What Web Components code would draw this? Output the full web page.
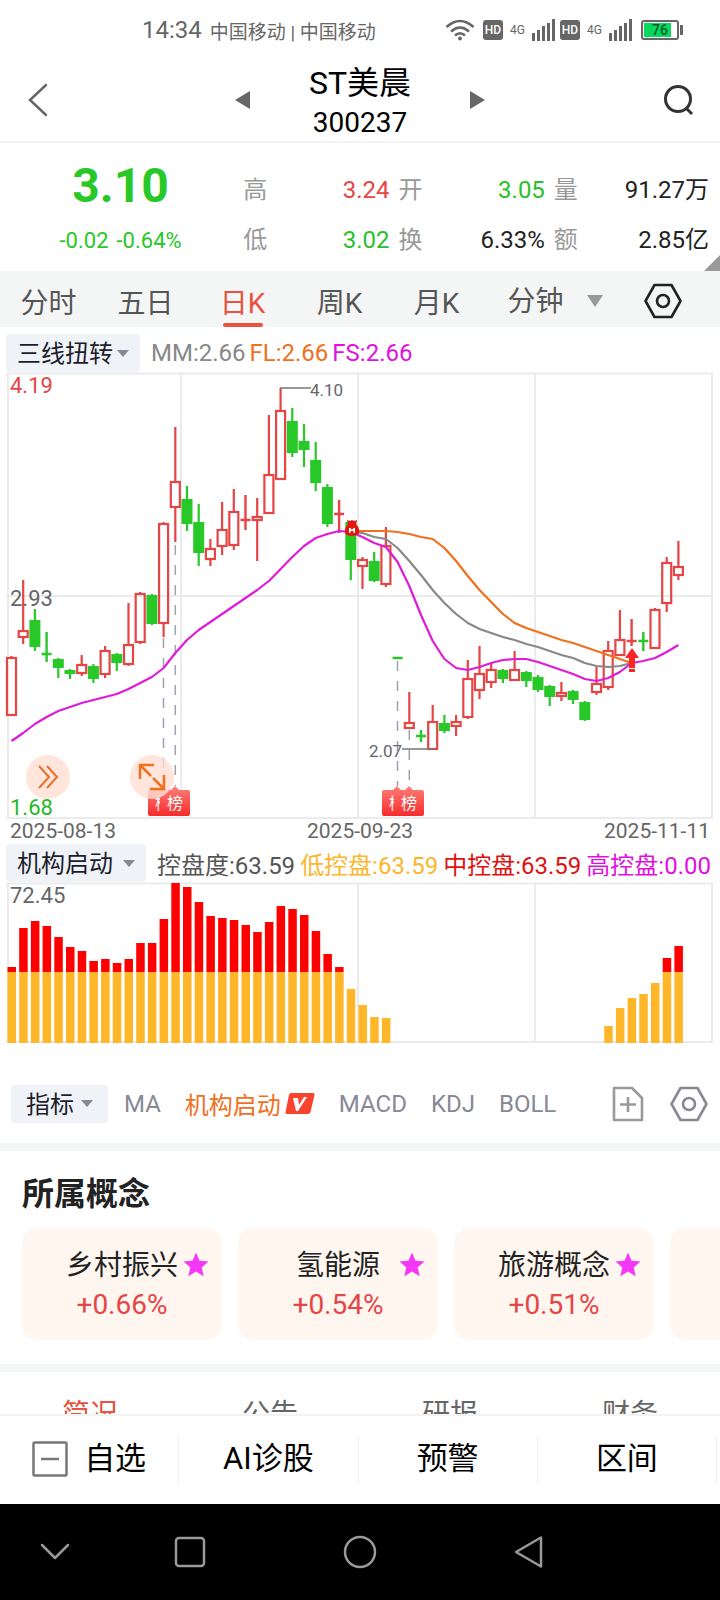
<!DOCTYPE html>
<html lang="zh-CN">
<head>
<meta charset="utf-8">
<meta name="viewport" content="width=device-width, initial-scale=1">
<title>ST美晨 300237</title>
<style>
    body {
        margin: 0;
        font-family: Roboto, 'Noto Sans CJK SC', sans-serif;
        background: #fff;
        color: #222;
    }
</style>
</head>
<body>
<stock-app></stock-app>

<script>
const base = /*html*/ `
    <style>
        * { box-sizing: border-box; }
        :host { display: block; }
        svg { display: block; flex: none; }
        button, select {
            font: inherit;
            color: inherit;
            background: none;
            border: 0;
            padding: 0;
            margin: 0;
            appearance: none;
            cursor: pointer;
        }
    </style>
`

class BaseElement extends HTMLElement {
    constructor() {
        super()
        this.shadow = this.attachShadow({ mode: 'open' })
        this.shadow.innerHTML = base + this.render()
    }
}

/**
 * Candles: high, body top, body bottom, low, direction (1 up, 0 down)
 */
const candles = [
    [284, 285, 343, 344, 1], [208, 258, 265, 272, 1], [237, 248, 275, 279, 0], [260, 282, 284, 290, 0],
    [286, 287, 296, 306, 0], [297, 298, 302, 307, 0], [283, 292, 301, 304, 1], [292, 294, 307, 311, 0],
    [274, 278, 302, 306, 1], [281, 282, 291, 299, 0], [231, 272, 292, 294, 1], [220, 221, 270, 272, 1],
    [222, 223, 252, 253, 0], [150, 151, 251, 265, 1], [55, 109, 135, 170, 1], [114, 127, 152, 159, 0],
    [132, 150, 181, 194, 0], [167, 176, 187, 194, 1], [130, 157, 174, 183, 1], [117, 139, 173, 178, 1],
    [123, 148, 150, 158, 1], [126, 144, 148, 189, 1], [43, 102, 141, 141, 1], [16, 38, 107, 107, 1],
    [36, 49, 81, 85, 0], [52, 69, 78, 95, 0], [70, 88, 111, 119, 0], [112, 115, 152, 155, 0],
    [128, 142, 144, 161, 1], [149, 150, 188, 208, 0], [185, 187, 194, 217, 1], [180, 189, 209, 210, 0],
    [155, 173, 212, 215, 1], [286, 286, 287, 287, 0], [320, 350, 356, 356, 1], [358, 364, 365, 370, 0],
    [333, 349, 377, 377, 1], [343, 351, 359, 361, 0], [343, 349, 354, 364, 1], [288, 306, 345, 347, 1],
    [274, 301, 318, 327, 1], [291, 297, 310, 316, 1], [297, 298, 307, 311, 0], [279, 297, 308, 309, 1],
    [299, 300, 309, 315, 0], [303, 305, 318, 320, 0], [313, 314, 325, 334, 0], [310, 320, 324, 329, 1],
    [318, 319, 328, 332, 0], [329, 330, 348, 349, 0], [295, 311, 320, 323, 1], [269, 278, 315, 318, 1],
    [238, 267, 283, 284, 1], [247, 269, 270, 274, 1], [260, 269, 270, 279, 0], [236, 237, 276, 277, 1],
    [185, 190, 231, 240, 1], [169, 194, 203, 208, 1]
]

const fs = [
    369, 361, 352, 345, 339, 335, 331, 328, 325, 322, 317, 311, 305, 296, 281, 268, 258, 250, 242, 234,
    226, 218, 209, 197, 185, 174, 166, 162, 159, 160, 165, 171, 175, 190, 214, 243, 269, 287, 296, 298,
    295, 291, 288, 287, 287, 290, 294, 298, 302, 307, 309, 306, 300, 291, 289, 286, 280, 273
]
const fl = [
    159, 159, 159, 159, 160, 162, 165, 167, 176, 189, 204, 218, 230, 242, 251, 256, 260, 264, 268, 271,
    275, 279, 283, 287, 291
]
const mm = [
    160, 161, 165, 167, 176, 189, 203, 218, 231, 242, 251, 257, 261, 265, 268, 272, 275, 279, 283, 286,
    291, 294, 295, 294, 291
]

// bar tops, keyed by the first candle of each run
const volume = {
    0: [85, 46, 39, 44, 55, 65, 69, 79, 77, 81, 77, 61, 61, 37, 1, 5, 20, 34, 36, 38, 43, 50, 40, 24, 27,
        33, 49, 72, 85, 107, 123, 135, 136],
    51: [144, 126, 116, 112, 101, 76, 64]
}

const step = 11.7
const cx = i => 11.5 + i * step

const polyline = (values, start, color) => `
    <polyline fill="none" stroke="${color}" stroke-width="2.2" stroke-linejoin="round"
        points="${values.map((y, i) => cx(start + i) + ',' + y).join(' ')}"/>`

function candle([high, top, bottom, low, up], i) {
    const x = cx(i)
    if (bottom - top < 3) {
        const c = up ? '#e64545' : '#28c828'
        return `<path d="M${x} ${high}V${low}M${x - 5} ${top}H${x + 5}" stroke="${c}" stroke-width="2.4"/>`
    }
    if (up) {
        return `<path d="M${x} ${high}V${top}M${x} ${bottom}V${low}" stroke="#e64545" stroke-width="2.2"/>
            <rect x="${x - 4.5}" y="${top + 1}" width="9" height="${bottom - top - 1}" fill="none" stroke="#e64545" stroke-width="2.2"/>`
    }
    return `<path d="M${x} ${high}V${low}" stroke="#28c828" stroke-width="2.2"/>
        <rect x="${x - 5.5}" y="${top}" width="11" height="${bottom - top}" fill="#28c828"/>`
}

const hexagon = (size, color) => /*html*/ `
    <svg width="${size}" height="${size}" viewBox="0 0 38 38" fill="none" stroke="${color}" stroke-width="2.6" stroke-linejoin="round" aria-hidden="true">
        <path d="M10.500 3h17L36.500 19l-9 16h-17l-9-16z"/>
        <circle cx="19" cy="19" r="6"/>
    </svg>`

class StatusBar extends BaseElement {
    render() {
        const signal = /*html*/ `
            <b>HD</b><small>4G</small>
            <svg width="24" height="22" viewBox="0 0 24 22" fill="#666">
                <path d="M0 14h3v8H0zM5 11h3v11H5zM10 7h3v15h-3zM15 4h3v18h-3zM20 0h3v22h-3z"/>
            </svg>`
        return /*html*/ `
            <style>
                :host { display: flex; align-items: center; height: 60px; padding: 0 37px 0 142px; color: #666; }
                .time { font-size: 24px; margin-right: 8px; }
                .carrier { font-size: 19px; }
                .icons { display: flex; align-items: center; gap: 4px; margin-left: auto; }
                .wifi { margin-right: 4px; }
                b {
                    width: 20px; height: 20px; line-height: 20px; border-radius: 3px; background: #666;
                    color: #fff; font-size: 12px; font-weight: 500; text-align: center;
                }
                small { width: 21px; font-size: 12px; text-align: center; }
                .battery {
                    position: relative; width: 38px; height: 20px; margin: 0 4px; padding: 1px;
                    border: 2px solid #666; border-radius: 3px;
                    font-size: 14px; line-height: 15px; font-weight: 500; text-align: center; color: #0a5c2c;
                    background: linear-gradient(90deg, #08d860 0 27px, #fff 27px) content-box;
                }
                .battery::after { content: ''; position: absolute; right: -6px; top: 3px; width: 3px; height: 10px; background: #666; }
            </style>
            <span class="time">14:34</span>
            <span class="carrier">中国移动 | 中国移动</span>
            <div class="icons">
                <svg class="wifi" width="30" height="22" viewBox="0 0 30 22" fill="none" stroke="#666" stroke-width="2.6">
                    <path d="M1.500 8Q15-4 28.500 8M6 12.500q9-8 18 0M10 16.500q5-4.500 10 0"/>
                    <circle cx="15" cy="19.500" r="2" fill="#666" stroke="none"/>
                </svg>
                ${signal}${signal}
                <div class="battery">76</div>
            </div>
        `
    }
}
customElements.define('status-bar', StatusBar)

class StockHeader extends BaseElement {
    render() {
        return /*html*/ `
            <style>
                :host {
                    display: grid; grid-template-columns: 1fr 250px 1fr; align-items: center;
                    height: 83px; padding: 0 26px; border-bottom: 2px solid #f3f3f3; color: #000;
                }
                button { display: block; margin-bottom: 3px; }
                .search { margin-left: auto; }
                .title { display: flex; align-items: center; justify-content: space-between; }
                h1 { margin: 2px 0 0; font-size: 32px; line-height: 42px; font-weight: 400; text-align: center; }
                h1 span { display: block; font-size: 28px; line-height: 38px; }
            </style>
            <button aria-label="返回">
                <svg width="24" height="34" viewBox="0 0 24 34" fill="none" stroke="#666" stroke-width="2.5" stroke-linecap="round">
                    <path d="M20 2 4 17l16 15"/>
                </svg>
            </button>
            <div class="title">
                <button aria-label="上一只"><svg width="15" height="20" fill="#666"><path d="M0 10 15 1v18z"/></svg></button>
                <h1>ST美晨<span>300237</span></h1>
                <button aria-label="下一只"><svg width="15" height="20" fill="#666"><path d="M15 10 0 1v18z"/></svg></button>
            </div>
            <button class="search" aria-label="搜索">
                <svg width="32" height="32" viewBox="0 0 32 32" fill="none" stroke="#333" stroke-width="3">
                    <circle cx="16" cy="15" r="12.500"/><path d="m24 24 6 6"/>
                </svg>
            </button>
        `
    }
}
customElements.define('stock-header', StockHeader)

class StockQuote extends BaseElement {
    render() {
        return /*html*/ `
            <style>
                :host {
                    position: relative; display: grid; grid-template-columns: 160fr 100fr 100fr 106fr;
                    column-gap: 9px; height: 128px; padding: 22px 11px 0 0; font-size: 24px; line-height: 50px;
                }
                .price { text-align: center; padding-left: 7px; color: #28c828; }
                .price strong { display: block; font-size: 48px; line-height: 42px; }
                .change { display: flex; justify-content: center; gap: 8px; font-size: 22px; line-height: 30px; margin-top: 19px; }
                dl { margin: 0; display: grid; grid-template-columns: auto 1fr; align-content: start; }
                dt { color: #999; }
                dd { margin: 0; text-align: right; }
                .up { color: #e64545; }
                .down { color: #28c028; }
                .more { position: absolute; right: 0; bottom: 0; fill: #999; }
            </style>
            <div class="price"><strong>3.10</strong><div class="change"><span>-0.02</span><span>-0.64%</span></div></div>
            <dl><dt>高</dt><dd class="up">3.24</dd><dt>低</dt><dd class="down">3.02</dd></dl>
            <dl><dt>开</dt><dd class="down">3.05</dd><dt>换</dt><dd>6.33%</dd></dl>
            <dl><dt>量</dt><dd>91.27万</dd><dt>额</dt><dd>2.85亿</dd></dl>
            <svg class="more" width="16" height="16"><path d="M16 0v16H0z"/></svg>
        `
    }
}
customElements.define('stock-quote', StockQuote)

class PeriodTabs extends BaseElement {
    render() {
        return /*html*/ `
            <style>
                :host {
                    display: grid; grid-template-columns: repeat(5, 97fr) 102fr 133fr; height: 56px;
                    background: #f4f5f5; color: #555; font-size: 28px;
                }
                button, .minutes { position: relative; display: flex; justify-content: center; align-items: center; padding-top: 4px; }
                .active { color: #e8523f; }
                .active::after {
                    content: ''; position: absolute; left: 29px; right: 28px; bottom: 0; height: 4px;
                    border-radius: 2px; background: #e8523f;
                }
                .end { display: flex; align-items: center; justify-content: space-between; padding: 4px 38px 0 0; }
                .end button { padding: 0; }
            </style>
            <button>分时</button>
            <button>五日</button>
            <button class="active">日K</button>
            <button>周K</button>
            <button>月K</button>
            <label class="minutes"><select aria-label="分钟周期"><option>分钟</option></select></label>
            <div class="end">
                <svg width="16" height="12" fill="#999"><path d="M0 0h16L8 12z"/></svg>
                <button aria-label="图表设置">${hexagon(38, '#222')}</button>
            </div>
        `
    }
}
customElements.define('period-tabs', PeriodTabs)

class DropDown extends BaseElement {
    connectedCallback() {
        const select = this.shadow.querySelector('select')
        select.setAttribute('aria-label', this.getAttribute('label'))
        select.innerHTML = `<option>${this.getAttribute('value')}</option>`
    }

    render() {
        return /*html*/ `
            <style>
                :host { flex: none; font-size: 24px; color: #1c1c2c; background: #eff3f7; border-radius: 4px; }
                label { display: flex; align-items: center; justify-content: space-between; height: 38px; padding: 0 11px; }
                select { padding-top: 2px; }
                :host([wide]) label { padding: 0 15px; }
            </style>
            <label>
                <select></select>
                <svg width="12" height="7" fill="#888896"><path d="M0 0h12L6 7z"/></svg>
            </label>
        `
    }
}
customElements.define('drop-down', DropDown)

class IndicatorBar extends BaseElement {
    render() {
        return /*html*/ `
            <style>
                :host { display: flex; align-items: center; padding: 2px 9px 0 6px; font-size: 24px; height: 40px; white-space: nowrap; }
                ::slotted(drop-down) { margin-right: 11px; }
            </style>
            <slot></slot>
        `
    }
}
customElements.define('indicator-bar', IndicatorBar)

class KChart extends BaseElement {
    badge(x) {
        return `<path d="M${x - 15} 420q0-2 2-2h9l4-4 4 4h9q2 0 2 2v22q0 2-2 2h-26q-2 0-2-2z" fill="url(#red)"/>
            <text x="${x}" y="437" font-size="16" fill="#fff" text-anchor="middle">榜</text>`
    }

    render() {
        return /*html*/ `
            <style>
                :host { position: relative; }
                svg.chart { width: 100%; height: auto; }
                button {
                    position: absolute; bottom: 21px; width: 44px; height: 44px; border-radius: 50%;
                    background: rgba(255, 222, 210, .8); display: flex; align-items: center; justify-content: center;
                }
                .forward { left: 26px; }
                .expand { left: 130px; }
            </style>
            <svg class="chart" viewBox="0 0 720 448" fill="none">
                <defs>
                    <linearGradient id="red" x2="0" y2="1"><stop stop-color="#ff7f78"/><stop offset="1" stop-color="#f52c2c"/></linearGradient>
                </defs>
                <path d="M6 1.500H713M8 1V447M181 1V446M358 1V446M535 1V446M712 1V446M6 224H712M6 446H713" stroke="#ebebeb" stroke-width="2"/>
                <g font-size="22" fill="#666">
                    <text x="10" y="21" fill="#e64545">4.19</text>
                    <text x="10" y="234">2.93</text>
                    <text x="10" y="443" fill="#28b828">1.68</text>
                </g>
                <path d="M163.500 266V414M175.300 173V414M397.500 289V414M409.300 358V414" stroke="#a0a0b0" stroke-width="1.500" stroke-dasharray="10 10"/>
                ${candles.map(candle).join('')}
                ${polyline(mm, 29, '#888')}
                ${polyline(fl, 29, '#f0701c')}
                ${polyline(fs, 0, '#e01ad8')}
                <path d="M280 16H311M402 377H434" stroke="#777" stroke-width="1.500"/>
                <g font-size="17" fill="#666">
                    <text x="310" y="24">4.10</text>
                    <text x="369" y="385">2.07</text>
                </g>
                <path d="M347 148l3 1 2-1 2 1 3-1-1 4q4 4 3 9-1 3-7 3t-7-3q-1-5 3-9z" fill="#e01810"/>
                <path d="M349 156l1.500 0 1.500 2 1.500-2h1.500v5h-1.500v-2h-3v2H349z" fill="#fff"/>
                <path d="M632 276l7 10h-4v10h-6v-10h-4zM629 297h6v3h-6z" fill="#ff2424"/>
                ${this.badge(163)}${this.badge(175)}${this.badge(397)}${this.badge(409)}
            </svg>
            <button class="forward" aria-label="快进">
                <svg width="22" height="24" viewBox="0 0 22 24" fill="none" stroke="#e87028" stroke-width="2"><path d="m2 1 10 11L2 23M10 1l10 11-10 11"/></svg>
            </button>
            <button class="expand" aria-label="全屏">
                <svg width="28" height="28" viewBox="0 0 28 28" fill="none" stroke="#f07020" stroke-width="2.5"><path d="M2 16V2h14M2 2l11 11M26 12v14H12M26 26 15 15"/></svg>
            </button>
        `
    }
}
customElements.define('k-chart', KChart)

class DateAxis extends BaseElement {
    render() {
        return /*html*/ `
            <style>
                :host { display: flex; justify-content: space-between; padding: 1px 10px 0; font-size: 21px; line-height: 21px; color: #666; }
            </style>
            <span>2025-08-13</span><span>2025-09-23</span><span>2025-11-11</span>
        `
    }
}
customElements.define('date-axis', DateAxis)

class VolumeChart extends BaseElement {
    render() {
        const limit = 90
        const bars = Object.entries(volume).map(([start, tops]) =>
            tops.map((y, i) => {
                const x = cx(Number(start) + i) - 4
                const split = Math.max(y, limit)
                return `<rect x="${x}" y="${y}" width="8.5" height="${split - y}" fill="#f00"/>
                    <rect x="${x}" y="${split}" width="8.5" height="${161 - split}" fill="#ffb629"/>`
            }).join('')
        ).join('')
        return /*html*/ `
            <style>
                svg { width: 100%; height: auto; }
            </style>
            <svg viewBox="0 0 720 162">
                <path d="M6 1.500H713M8 1V160M358 1V160M535 1V160M712 1V160M6 160H713" stroke="#ebebeb" stroke-width="2"/>
                ${bars}
                <text x="10" y="21" font-size="22" fill="#666">72.45</text>
            </svg>
        `
    }
}
customElements.define('volume-chart', VolumeChart)

class IndicatorTabs extends BaseElement {
    render() {
        return /*html*/ `
            <style>
                :host {
                    display: flex; align-items: center; gap: 24px; height: 99px; padding: 20px 12px 0 11px;
                    color: #888896; font-size: 24px;
                }
                drop-down { width: 97px; margin-right: -8px; }
                .active { display: flex; align-items: center; gap: 4px; color: #f0701c; }
                .add { margin-left: auto; margin-right: 2px; }
            </style>
            <drop-down wide label="指标" value="指标"></drop-down>
            <button>MA</button>
            <button class="active">机构启动
                <svg width="30" height="21" viewBox="0 0 30 21">
                    <path d="M6 0h22q2 0 1.500 2l-4 17q-.5 2-2.500 2H2q-2 0-1.500-2L4 2q.5-2 2-2z" fill="#f8442c"/>
                    <path d="M8 5h5l1 7 5-8h3L13 18h-2z" fill="#fff"/>
                </svg>
            </button>
            <button>MACD</button>
            <button>KDJ</button>
            <button>BOLL</button>
            <button class="add" aria-label="添加指标">
                <svg width="32" height="36" viewBox="0 0 32 36" fill="none" stroke="#999" stroke-width="2.6" stroke-linejoin="round">
                    <path d="M2 2h18l10 10v22H2zM16 11v15M8 18.500h16"/>
                </svg>
            </button>
            <button aria-label="指标设置">${hexagon(38, '#888896')}</button>
        `
    }
}
customElements.define('indicator-tabs', IndicatorTabs)

class ConceptCard extends BaseElement {
    render() {
        return /*html*/ `
            <style>
                :host {
                    position: relative; flex: 0 0 200px; height: 112px; padding-top: 18px; border-radius: 16px;
                    background: #fff6f0; text-align: center; font-size: 28px; line-height: 40px;
                }
                .rate { color: #e64545; line-height: 38px; }
                svg { position: absolute; right: 13px; top: 24px; fill: #f735f7; }
            </style>
            <slot></slot>
            <div class="rate"><slot name="rate"></slot></div>
            <svg width="26" height="26" viewBox="0 0 24 24"><path d="M12 .5l3.200 7.600 8.300.7-6.300 5.400 1.900 8.100L12 18l-7.100 4.300 1.900-8.100L.5 8.800l8.300-.7z"/></svg>
        `
    }
}
customElements.define('concept-card', ConceptCard)

class StockConcepts extends BaseElement {
    render() {
        return /*html*/ `
            <style>
                :host { border: solid #f4f6f6; border-width: 8px 0; padding: 23px 0 24px 22px; overflow: hidden; }
                h2 { margin: 0 0 14px; font-size: 32px; line-height: 40px; font-weight: 700; }
                .list { display: flex; gap: 16px; }
            </style>
            <h2>所属概念</h2>
            <div class="list">
                <concept-card>乡村振兴<span slot="rate">+0.66%</span></concept-card>
                <concept-card>氢能源<span slot="rate">+0.54%</span></concept-card>
                <concept-card>旅游概念<span slot="rate">+0.51%</span></concept-card>
                <concept-card></concept-card>
            </div>
        `
    }
}
customElements.define('stock-concepts', StockConcepts)

class InfoTabs extends BaseElement {
    render() {
        return /*html*/ `
            <style>
                :host { display: flex; height: 80px; font-size: 28px; color: #666; }
                button { flex: 1; }
                .active { color: #e8523f; }
            </style>
            <button class="active">简况</button>
            <button>公告</button>
            <button>研报</button>
            <button>财务</button>
        `
    }
}
customElements.define('info-tabs', InfoTabs)

class ActionBar extends BaseElement {
    render() {
        return /*html*/ `
            <style>
                :host {
                    display: flex; align-items: center; height: 90px; padding-right: 3px;
                    border-top: 2px solid #f3f3f3; background: #fff; color: #000; font-size: 31px;
                }
                button {
                    flex: 1; height: 48px; display: flex; align-items: center; justify-content: center;
                    gap: 16px; border-right: 1px solid #f0f0f0; line-height: 44px; padding-bottom: 2px;
                }
            </style>
            <button>
                <svg width="36" height="36" viewBox="0 0 36 36" fill="none" stroke="#777" stroke-width="2.5">
                    <rect x="1.500" y="1.500" width="33" height="33" rx="1"/><path d="M9 18h18"/>
                </svg>
                自选
            </button>
            <button>AI诊股</button>
            <button>预警</button>
            <button>区间</button>
        `
    }
}
customElements.define('action-bar', ActionBar)

class SystemNav extends BaseElement {
    render() {
        return /*html*/ `
            <style>
                :host { display: grid; grid-template-columns: 110fr 160fr 180fr 158fr 112fr; align-items: center; justify-items: center; height: 96px; background: #000; }
                svg { fill: none; stroke: #999; stroke-width: 2.5; stroke-linejoin: round; }
            </style>
            <button aria-label="收起"><svg width="30" height="18"><path d="m2 2 13 13L28 2" stroke-linecap="round"/></svg></button>
            <button aria-label="最近"><svg width="32" height="32"><rect x="2" y="2" width="28" height="28" rx="3"/></svg></button>
            <button aria-label="主页"><svg width="34" height="34"><circle cx="17" cy="17" r="15"/></svg></button>
            <button aria-label="返回"><svg width="30" height="34"><path d="M27 2.500v29L2 17z"/></svg></button>
        `
    }
}
customElements.define('system-nav', SystemNav)

class StockApp extends BaseElement {
    render() {
        return /*html*/ `
            <style>
                :host { display: flex; flex-direction: column; height: 100vh; }
                main { flex: 1; min-height: 0; overflow: hidden; }
                .main-indicator { margin-top: 5px; }
                .main-indicator drop-down { width: 134px; }
                .sub-indicator { justify-content: space-between; }
                .sub-indicator drop-down { width: 140px; margin-right: 6px; }
                .main-indicator span { margin-right: 4px; }
                .mm { color: #888; }
                .fl { color: #f0701c; }
                .high { color: #e010e0; }
                .low { color: #fbb62c; }
                .mid { color: #e01010; }
                .control { color: #555; }
            </style>
            <status-bar></status-bar>
            <stock-header></stock-header>
            <main>
                <stock-quote></stock-quote>
                <period-tabs></period-tabs>
                <indicator-bar class="main-indicator">
                    <drop-down label="主图指标" value="三线扭转"></drop-down>
                    <span class="mm">MM:2.66</span>
                    <span class="fl">FL:2.66</span>
                    <span class="high">FS:2.66</span>
                </indicator-bar>
                <k-chart></k-chart>
                <date-axis></date-axis>
                <indicator-bar class="sub-indicator">
                    <drop-down label="副图指标" value="机构启动"></drop-down>
                    <span class="control">控盘度:63.59</span>
                    <span class="low">低控盘:63.59</span>
                    <span class="mid">中控盘:63.59</span>
                    <span class="high">高控盘:0.00</span>
                </indicator-bar>
                <volume-chart></volume-chart>
                <indicator-tabs></indicator-tabs>
                <stock-concepts></stock-concepts>
                <info-tabs></info-tabs>
            </main>
            <action-bar></action-bar>
            <system-nav></system-nav>
        `
    }
}
customElements.define('stock-app', StockApp)
</script>
</body>
</html>
